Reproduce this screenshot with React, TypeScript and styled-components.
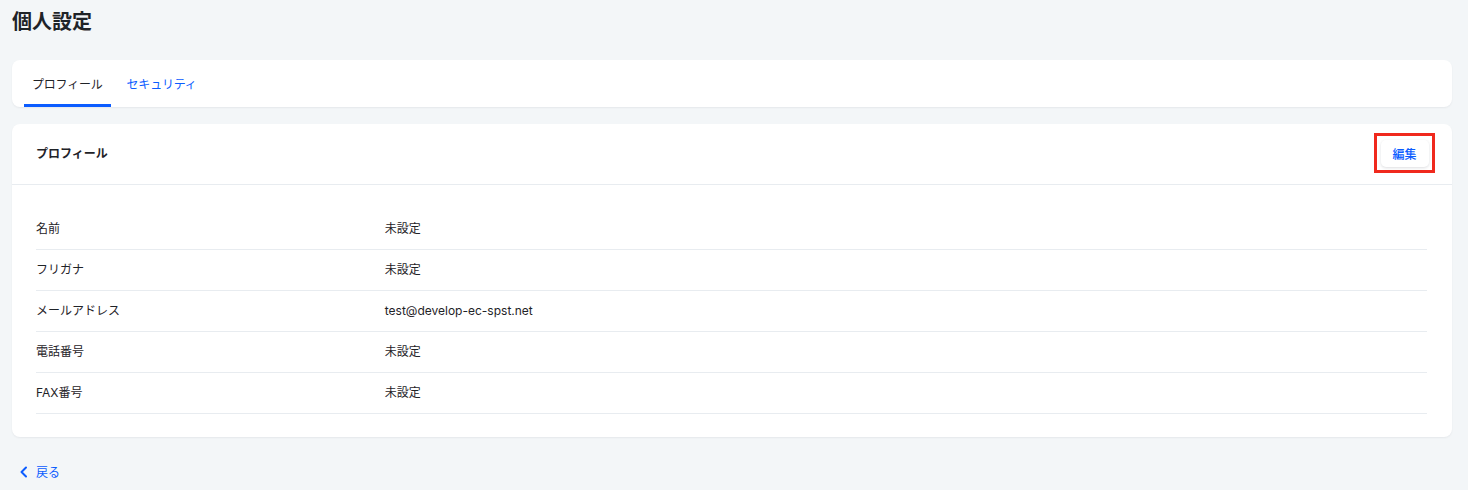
import React from 'react';
import styled, { createGlobalStyle } from 'styled-components';

const GlobalStyle = createGlobalStyle`
  html, body {
    margin: 0;
    padding: 0;
    background: #f3f6f8;
  }
  body {
    font-family: Inter, "Noto Sans CJK JP", sans-serif;
    color: #1f2328;
    -webkit-font-smoothing: antialiased;
  }
`;

const PROFILE = [
  { label: '名前', value: '未設定' },
  { label: 'フリガナ', value: '未設定' },
  { label: 'メールアドレス', value: 'test@develop-ec-spst.net' },
  { label: '電話番号', value: '未設定' },
  { label: 'FAX番号', value: '未設定' },
];

export default function App() {
  return (
    <Page>
      <GlobalStyle />
      <Title>個人設定</Title>
      <TabCard>
        <Tab active>プロフィール</Tab>
        <Tab>セキュリティ</Tab>
      </TabCard>
      <Card>
        <CardHeader>
          <CardTitle>プロフィール</CardTitle>
          <Highlight>
            <EditButton>編集</EditButton>
          </Highlight>
        </CardHeader>
        <CardBody>
          {PROFILE.map((item) => (
            <Row key={item.label}>
              <Label>{item.label}</Label>
              <Value>{item.value}</Value>
            </Row>
          ))}
        </CardBody>
      </Card>
      <BackLink>
        <svg width="10" height="12" viewBox="0 0 10 12" fill="none">
          <path d="M7 1.5L2.5 6L7 10.5" stroke="#0b5cff" strokeWidth="2" strokeLinecap="round" strokeLinejoin="round" />
        </svg>
        <span>戻る</span>
      </BackLink>
    </Page>
  );
}

const Page = styled.div`
  display: flex;
  flex-direction: column;
  padding: 8px 16px 0 12px;
  min-height: 482px;
`;

const Title = styled.h1`
  margin: 0;
  font-size: 20px;
  font-weight: 700;
  line-height: 28px;
  color: #1f2328;
`;

const TabCard = styled.div`
  display: flex;
  gap: 8px;
  margin-top: 24px;
  padding: 0 12px;
  height: 47px;
  background: #fff;
  border-radius: 8px;
  box-shadow: 0 1px 2px rgba(16, 24, 40, 0.06);
`;

const Tab = styled.div<{ active?: boolean }>`
  display: flex;
  align-items: center;
  padding: 2px 8px 0;
  font-size: 12px;
  letter-spacing: -0.2px;
  color: ${(p) => (p.active ? '#1f2328' : '#0b5cff')};
  border-bottom: 3px solid ${(p) => (p.active ? '#0b5cff' : 'transparent')};
`;

const Card = styled.div`
  margin-top: 17px;
  background: #fff;
  border-radius: 8px;
  box-shadow: 0 1px 2px rgba(16, 24, 40, 0.06);
`;

const CardHeader = styled.div`
  display: flex;
  align-items: center;
  justify-content: space-between;
  height: 60px;
  padding: 0 17px 0 24px;
  border-bottom: 1px solid #e8ecf0;
`;

const CardTitle = styled.div`
  font-size: 12px;
  font-weight: 700;
  line-height: 16px;
  margin-top: -1px;
  color: #1f2328;
`;

const Highlight = styled.div`
  display: flex;
  align-items: center;
  justify-content: center;
  width: 61px;
  height: 40px;
  box-sizing: border-box;
  border: 3px solid #f0291d;
  margin-top: -2px;
`;

const EditButton = styled.button`
  font-family: inherit;
  font-size: 12px;
  font-weight: 500;
  color: #0b5cff;
  background: #fff;
  border: none;
  border-radius: 5px;
  padding: 0;
  width: 48px;
  height: 27px;
  margin-top: 1px;
  box-shadow: 0 1px 3px rgba(16, 24, 40, 0.14);
`;

const CardBody = styled.div`
  padding: 24px 25px 23px 24px;
`;

const Row = styled.div`
  display: grid;
  grid-template-columns: calc(25% + 1px) 1fr;
  align-items: center;
  height: 41px;
  box-sizing: border-box;
  border-bottom: 1px solid #e8ecf0;
  font-size: 12px;
  line-height: 16px;
`;

const Label = styled.div`
  color: #1f2328;
`;

const Value = styled.div`
  color: #1f2328;
`;

const BackLink = styled.a`
  display: flex;
  align-items: center;
  gap: 7px;
  margin-top: 26px;
  padding-left: 7px;
  font-size: 12px;
  color: #0b5cff;
  cursor: pointer;
`;
